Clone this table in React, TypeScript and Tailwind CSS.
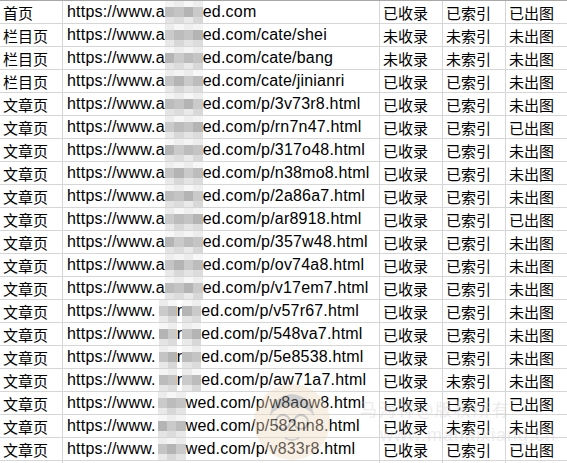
import React from "react";

type Row = [string, string, string, string, string];

const rows: Row[] = [
  ["首页", "", "已收录", "已索引", "已出图"],
  ["栏目页", "/cate/shei", "未收录", "未索引", "未出图"],
  ["栏目页", "/cate/bang", "未收录", "未索引", "未出图"],
  ["栏目页", "/cate/jinianri", "已收录", "已索引", "未出图"],
  ["文章页", "/p/3v73r8.html", "已收录", "已索引", "未出图"],
  ["文章页", "/p/rn7n47.html", "已收录", "已索引", "已出图"],
  ["文章页", "/p/317o48.html", "已收录", "已索引", "未出图"],
  ["文章页", "/p/n38mo8.html", "已收录", "已索引", "未出图"],
  ["文章页", "/p/2a86a7.html", "已收录", "已索引", "未出图"],
  ["文章页", "/p/ar8918.html", "已收录", "已索引", "已出图"],
  ["文章页", "/p/357w48.html", "已收录", "已索引", "未出图"],
  ["文章页", "/p/ov74a8.html", "已收录", "已索引", "未出图"],
  ["文章页", "/p/v17em7.html", "已收录", "已索引", "未出图"],
  ["文章页", "/p/v57r67.html", "已收录", "已索引", "未出图"],
  ["文章页", "/p/548va7.html", "已收录", "已索引", "未出图"],
  ["文章页", "/p/5e8538.html", "已收录", "已索引", "未出图"],
  ["文章页", "/p/aw71a7.html", "已收录", "未索引", "未出图"],
  ["文章页", "/p/w8aow8.html", "已收录", "已索引", "已出图"],
  ["文章页", "/p/582nn8.html", "已收录", "未索引", "未出图"],
  ["文章页", "/p/v833r8.html", "已收录", "已索引", "已出图"],
];

const cjk = "font-['Noto_Sans_CJK_SC','Microsoft_YaHei',sans-serif] text-[15px]";
const latin = "font-['Liberation_Sans',Arial,sans-serif] text-[16px] tracking-[0.2px]";

const midShades = ["bg-[#bcbcbc]", "bg-[#cacaca]", "bg-[#b4b4b4]", "bg-[#c4c4c4]"];
const topShades = ["bg-[#f4f4f4]", "bg-[#ececec]", "bg-[#f7f7f7]", "bg-[#eeeeee]"];
const botShades = ["bg-[#e4e4e4]", "bg-[#dcdcdc]", "bg-[#e9e9e9]", "bg-[#d8d8d8]"];

function Mosaic({ cols, seed, widthCls }: { cols: number; seed: number; widthCls: string }) {
  const idx = Array.from({ length: cols }, (_, i) => i);
  return (
    <span className={`self-stretch shrink-0 ${widthCls} flex flex-col overflow-hidden`}>
      <span className="flex h-[6px]">
        {idx.map((i) => (
          <span key={i} className={`flex-1 ${topShades[(i + seed) % 4]}`} />
        ))}
      </span>
      <span className="flex h-[10px]">
        {idx.map((i) => (
          <span key={i} className={`flex-1 ${midShades[(i * 3 + seed) % 4]}`} />
        ))}
      </span>
      <span className="flex flex-1">
        {idx.map((i) => (
          <span key={i} className={`flex-1 ${botShades[(i + seed * 2) % 4]}`} />
        ))}
      </span>
    </span>
  );
}

function Url({ r, path }: { r: number; path: string }) {
  if (r < 13) {
    return (
      <>
        <span>https://www.a</span>
        <Mosaic cols={4} seed={r} widthCls="w-[38px]" />
        <span>{`ed.com${path}`}</span>
      </>
    );
  }
  if (r < 17) {
    return (
      <>
        <span>https://www.</span>
        <span className="w-[3px] shrink-0" />
        <Mosaic cols={2} seed={r} widthCls="w-[18px]" />
        <span>r</span>
        <Mosaic cols={2} seed={r + 1} widthCls="w-[19px]" />
        <span>{`ed.com${path}`}</span>
      </>
    );
  }
  return (
    <>
      <span>https://www.</span>
      <span className="w-[2px] shrink-0" />
      <Mosaic cols={3} seed={r} widthCls="w-[28px]" />
      <span>{`wed.com${path}`}</span>
    </>
  );
}

export default function App() {
  return (
    <div className="relative w-[567px] h-[463px] overflow-hidden bg-white text-black">
      <div className="border-t border-[#a8a8a8]">
        {rows.map((row, r) => (
          <div key={r} className="grid grid-cols-[63px_317px_63px_63px_61px] h-[23px]">
            <div className={`border-r border-b border-[#d6d6d6] pl-[3px] flex items-center leading-none ${cjk}`}>{row[0]}</div>
            <div className={`border-r border-b border-[#d6d6d6] pl-[4px] flex items-center leading-none whitespace-nowrap overflow-hidden ${latin}`}>
              <Url r={r} path={row[1]} />
            </div>
            <div className={`border-r border-b border-[#d6d6d6] pl-[3px] flex items-center leading-none ${cjk}`}>{row[2]}</div>
            <div className={`border-r border-b border-[#d6d6d6] pl-[3px] flex items-center leading-none ${cjk}`}>{row[3]}</div>
            <div className={`border-b border-[#d6d6d6] pl-[3px] flex items-center leading-none ${cjk}`}>{row[4]}</div>
          </div>
        ))}
        <div className="grid grid-cols-[63px_317px_63px_63px_61px] h-[23px]">
          <div className="border-r border-[#d6d6d6]" />
          <div className="border-r border-[#d6d6d6]" />
          <div className="border-r border-[#d6d6d6]" />
          <div className="border-r border-[#d6d6d6]" />
          <div />
        </div>
      </div>

      {/* watermark */}
      <div className="absolute left-[252px] top-[382px] w-[80px] h-[80px] pointer-events-none opacity-40">
        <svg viewBox="0 0 80 80" width="80" height="80">
          <circle cx="40" cy="40" r="38" fill="#f1dcc0" />
          <path d="M18 34 Q20 14 40 12 Q60 14 62 34 Q56 24 40 24 Q24 24 18 34 Z" fill="#8a8a8a" />
          <circle cx="31" cy="40" r="7" fill="none" stroke="#777" strokeWidth="2" />
          <circle cx="49" cy="40" r="7" fill="none" stroke="#777" strokeWidth="2" />
          <line x1="38" y1="40" x2="42" y2="40" stroke="#777" strokeWidth="2" />
          <path d="M33 56 Q40 60 47 56" fill="none" stroke="#888" strokeWidth="2" />
        </svg>
      </div>
      <div className="absolute left-[360px] top-[400px] pointer-events-none text-[17px] leading-none text-[#d0d0d0] opacity-40 font-['Noto_Sans_CJK_SC',sans-serif] tracking-[2px]">
        马海祥@版权所有
      </div>
      <div className="absolute left-[380px] top-[426px] pointer-events-none text-[18px] leading-none text-[#d0d0d0] opacity-35 font-['Liberation_Sans',sans-serif] tracking-[1px]">
        www.mahaixiang.cn
      </div>
    </div>
  );
}
